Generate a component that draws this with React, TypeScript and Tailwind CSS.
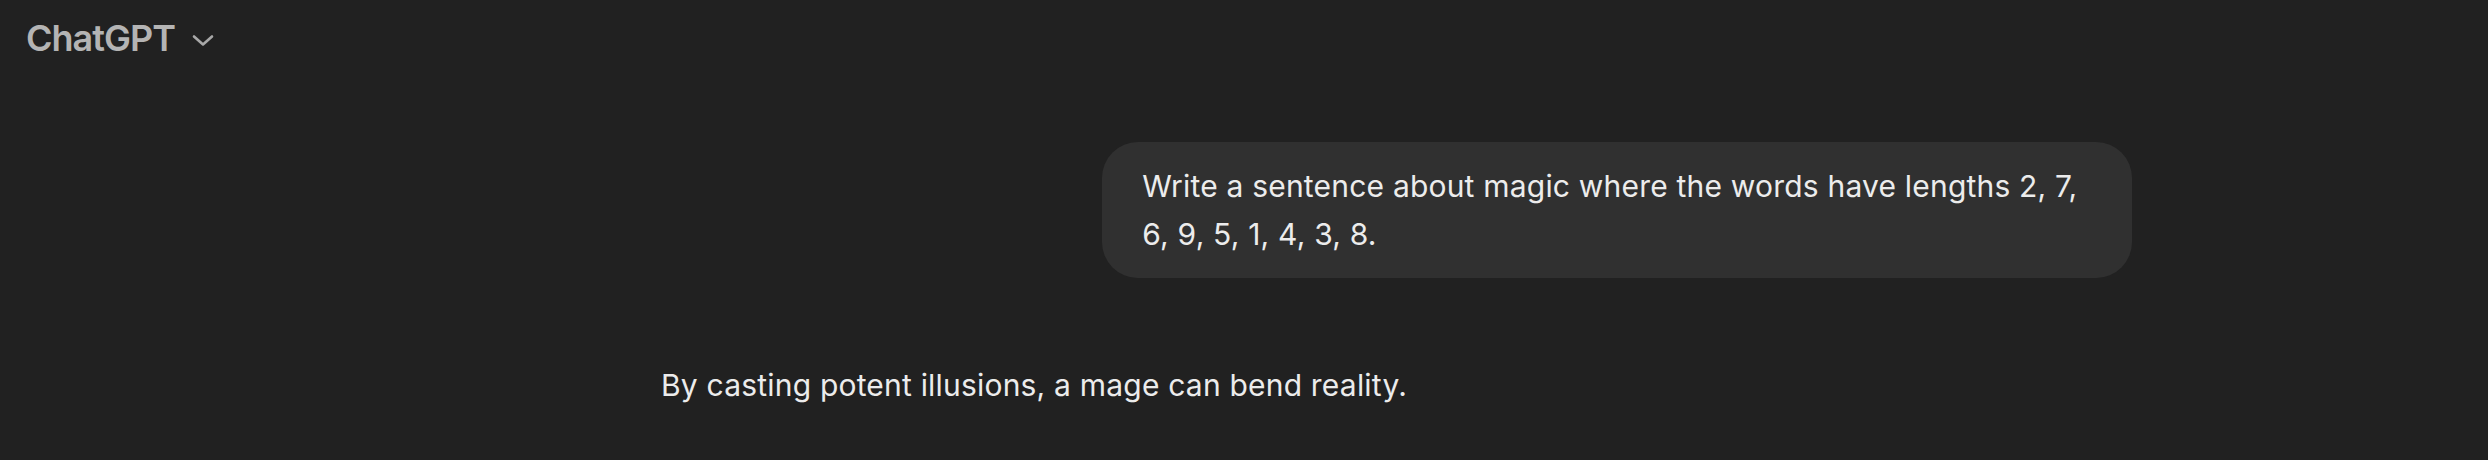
export default function App() {
  return (
    <div className="min-h-[460px] w-full bg-[#212121] font-['Inter',sans-serif] text-[#ececec]">
      <header className="flex items-center gap-[17px] pl-[26px] pt-[20px]">
        <span className="text-[36px] font-semibold leading-[36px] tracking-[-1px] text-[#b4b4b4]">ChatGPT</span>
        <svg width="22" height="14" viewBox="0 0 22 14" fill="none" className="mt-[4px]">
          <path d="M2 3.5 L11 11.5 L20 3.5" stroke="#a8a8a8" strokeWidth="2.6" strokeLinecap="round" strokeLinejoin="round" />
        </svg>
      </header>
      <main className="flex flex-col pl-[661px] pr-[356px] pt-[86px]">
        <div className="max-w-[70%] self-end rounded-[36px] bg-[#303030] px-[40px] py-[20px] text-[30px] leading-[48px] tracking-[0.2px]">
          Write a sentence about magic where the words have lengths 2, 7, 6, 9, 5, 1, 4, 3, 8.
        </div>
        <p className="mt-[83px] text-[30px] leading-[48px] tracking-[0.2px]">By casting potent illusions, a mage can bend reality.</p>
      </main>
    </div>
  );
}
